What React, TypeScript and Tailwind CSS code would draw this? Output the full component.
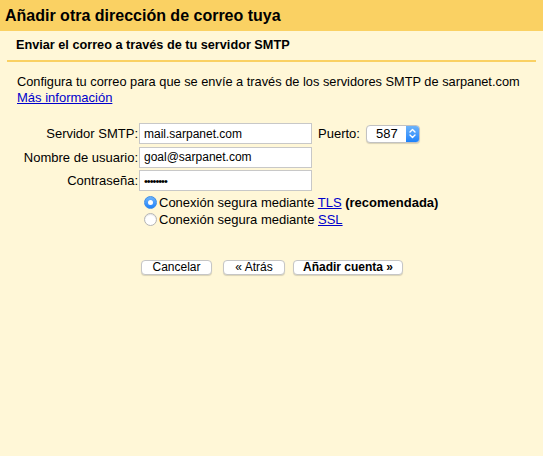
export default function App() {
  return (
    <div className="w-[543px] h-[456px] bg-[#fff7d7] text-black text-[13px] leading-none" style={{ fontFamily: '"Liberation Sans", Arial, sans-serif' }}>
      <div className="h-[31px] bg-[#fad163] flex items-center pl-[5px]">
        <h1 className="font-bold text-[16px]">Añadir otra dirección de correo tuya</h1>
      </div>
      <div className="px-[7px]">
        <div className="h-[31px] flex items-center pl-[9px] border-b-2 border-[#fad163]">
          <h2 className="font-bold text-[12.7px]">Enviar el correo a través de tu servidor SMTP</h2>
        </div>
      </div>
      <div className="pl-[17px] pt-[12px] leading-[16px]">
        <p className="text-[12.8px]">Configura tu correo para que se envíe a través de los servidores SMTP de sarpanet.com</p>
        <a href="#" className="text-[#0000cc] underline">Más información</a>
      </div>
      <div className="mt-[17px] flex">
        <div className="w-[139px] flex flex-col items-end gap-[2.5px] text-right">
          <div className="h-[21px] flex items-center pr-[1px]">Servidor SMTP:</div>
          <div className="h-[21px] flex items-center pr-[1px]">Nombre de usuario:</div>
          <div className="h-[21px] flex items-center pr-[1px]">Contraseña:</div>
        </div>
        <div className="flex flex-col gap-[2.5px]">
          <div className="flex items-center">
            <input className="w-[173px] h-[21px] bg-white border border-[#c8c8c8] px-[4px] text-[12px] outline-none" defaultValue="mail.sarpanet.com" />
            <span className="ml-[6px]">Puerto:</span>
            <div className="ml-[6px] w-[54px] h-[18px] flex rounded-[4px] border border-[#c2c2c2] bg-white shadow-[0_1px_1px_rgba(0,0,0,0.15)] overflow-hidden">
              <div className="flex-1 flex items-center pl-[9px]">587</div>
              <div className="w-[13px] bg-gradient-to-b from-[#6cb3fa] to-[#1a82fb] flex items-center justify-center">
                <svg width="7" height="11" viewBox="0 0 7 11" fill="none" stroke="white" strokeWidth="1.4" strokeLinecap="round" strokeLinejoin="round">
                  <path d="M1 4 L3.5 1.5 L6 4" />
                  <path d="M1 7 L3.5 9.5 L6 7" />
                </svg>
              </div>
            </div>
          </div>
          <input className="w-[173px] h-[21px] bg-white border border-[#c8c8c8] px-[4px] text-[12px] outline-none" defaultValue="goal@sarpanet.com" />
          <input type="password" className="w-[173px] h-[21px] bg-white border border-[#c8c8c8] px-[4px] text-[11px] tracking-[-1px] outline-none" defaultValue="abcdefgh" />
          <div className="mt-[2px] pl-[5px] flex flex-col gap-[3px]">
            <label className="flex items-center gap-[2px] h-[14px]">
              <span className="w-[13px] h-[13px] rounded-full bg-gradient-to-b from-[#6cb3fa] to-[#1a82fb] flex items-center justify-center border border-[#3d8ee8]">
                <span className="w-[5px] h-[5px] rounded-full bg-white" />
              </span>
              <span>Conexión segura mediante <a href="#" className="text-[#0000cc] underline">TLS</a> <b>(recomendada)</b></span>
            </label>
            <label className="flex items-center gap-[2px] h-[14px]">
              <span className="w-[13px] h-[13px] rounded-full bg-white border border-[#b4b4b4] shadow-[inset_0_1px_1px_rgba(0,0,0,0.1)]" />
              <span>Conexión segura mediante <a href="#" className="text-[#0000cc] underline">SSL</a></span>
            </label>
          </div>
        </div>
      </div>
      <div className="mt-[33px] pl-[141px] flex gap-[11px] text-[12px]">
        <button className="w-[71px] h-[15px] bg-white border border-[#c6c6c6] rounded-[4px] shadow-[0_1px_1px_rgba(0,0,0,0.15)] flex items-center justify-center">Cancelar</button>
        <button className="w-[62px] h-[15px] bg-white border border-[#c6c6c6] rounded-[4px] shadow-[0_1px_1px_rgba(0,0,0,0.15)] flex items-center justify-center">« Atrás</button>
        <button className="w-[110px] h-[15px] -ml-[3px] bg-white border border-[#c6c6c6] rounded-[4px] shadow-[0_1px_1px_rgba(0,0,0,0.15)] flex items-center justify-center font-bold">Añadir cuenta »</button>
      </div>
    </div>
  );
}
